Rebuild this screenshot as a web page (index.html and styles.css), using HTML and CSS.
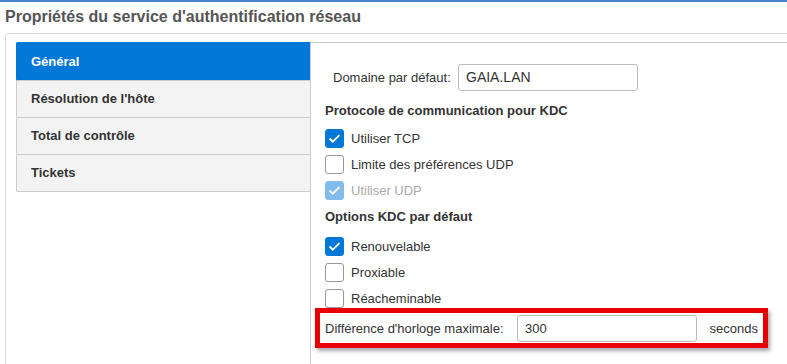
FILE: index.html
```html
<!DOCTYPE html>
<html lang="fr">
<head>
    <meta charset="UTF-8">
    <title>Propriétés du service d'authentification réseau</title>
    <link rel="stylesheet" href="styles.css">
</head>
<body>
    <div class="topline"></div>
    <h1 class="title">Propriétés du service d'authentification réseau</h1>
    <div class="panel">
        <div class="tabs">
            <div class="tab active">Général</div>
            <div class="tab">Résolution de l'hôte</div>
            <div class="tab">Total de contrôle</div>
            <div class="tab">Tickets</div>
        </div>
        <div class="pane">
            <div class="field-row">
                <label class="field-label">Domaine par défaut:</label>
                <div class="textbox">GAIA.LAN</div>
            </div>

            <h2 class="section first">Protocole de communication pour KDC</h2>
            <div class="check-row">
                <span class="box checked"><svg viewBox="0 0 19 19"><path d="M4 9.5l3.6 3.6L15 5.6"/></svg></span>
                <span>Utiliser TCP</span>
            </div>
            <div class="check-row">
                <span class="box"></span>
                <span>Limite des préférences UDP</span>
            </div>
            <div class="check-row disabled">
                <span class="box checked"><svg viewBox="0 0 19 19"><path d="M4 9.5l3.6 3.6L15 5.6"/></svg></span>
                <span>Utiliser UDP</span>
            </div>

            <h2 class="section">Options KDC par défaut</h2>
            <div class="check-row">
                <span class="box checked"><svg viewBox="0 0 19 19"><path d="M4 9.5l3.6 3.6L15 5.6"/></svg></span>
                <span>Renouvelable</span>
            </div>
            <div class="check-row">
                <span class="box"></span>
                <span>Proxiable</span>
            </div>
            <div class="check-row">
                <span class="box"></span>
                <span>Réacheminable</span>
            </div>

            <div class="skew-row">
                <label class="skew-label">Différence d'horloge maximale:</label>
                <div class="textbox skew-input">300</div>
                <span class="unit">seconds</span>
            </div>
        </div>
    </div>
</body>
</html>
```

FILE: styles.css
```css
body {
    margin: 0;
    font-family: 'Liberation Sans', Arial, sans-serif;
    font-size: 13px;
    color: #333;
    background-color: #fff;
    overflow: hidden;
    height: 364px;
}
.topline {
    height: 2px;
    background-color: #4a82cc;
}
.title {
    margin: 0;
    padding: 5px 0 0 5px;
    height: 26px;
    font-size: 16px;
    font-weight: bold;
    color: #555;
    line-height: 20px;
}
.panel {
    margin-left: 5px;
    width: 771px;
    height: 322px;
    border: 1px solid #ddd;
    border-right: none;
    border-bottom: none;
    border-radius: 4px 0 0 0;
    padding: 8px 0 0 10px;
    display: flex;
}
.tabs {
    width: 294px;
    flex-shrink: 0;
}
.tab {
    height: 36px;
    line-height: 36px;
    padding-left: 14px;
    font-weight: bold;
    background-color: #f3f3f3;
    border: 1px solid #ccc;
    border-right: none;
    border-radius: 2px 0 0 2px;
}
.tab + .tab {
    margin-top: -1px;
}
.tab.active {
    background-color: #0078d7;
    border-color: #0078d7;
    color: #fff;
    height: 37px;
    line-height: 37px;
}
.pane {
    flex: 1;
    border-top: 1px solid #ccc;
    border-left: 1px solid #ccc;
    padding: 21px 0 0 14px;
}
.field-row {
    display: flex;
    align-items: center;
    padding-left: 8px;
}
.field-label {
    width: 125px;
}
.textbox {
    box-sizing: border-box;
    width: 180px;
    height: 27px;
    border: 1px solid #bbb;
    border-radius: 3px;
    padding: 0 7px;
    line-height: 25px;
    font-size: 14px;
}
.section {
    margin: 6px 0 8px;
    font-size: 13px;
    font-weight: bold;
    line-height: 16px;
}
.section.first {
    margin: 12px 0 6px;
}
.check-row {
    display: flex;
    align-items: center;
    height: 26px;
}
.box {
    box-sizing: border-box;
    width: 19px;
    height: 19px;
    border: 1px solid #999;
    border-radius: 3px;
    margin-right: 7px;
    display: flex;
}
.box svg {
    width: 17px;
    height: 17px;
}
.box path {
    fill: none;
    stroke: #fff;
    stroke-width: 2;
}
.box.checked {
    background-color: #0078d7;
    border-color: #0078d7;
}
.check-row.disabled {
    color: #aaa;
}
.check-row.disabled .box {
    background-color: #82bcec;
    border-color: #82bcec;
}
.skew-row {
    position: relative;
    display: flex;
    align-items: center;
    margin: -3px 0 0 -10px;
    width: 433px;
    height: 30px;
    padding: 0 5px;
    border: 5px solid #e80000;
    background-color: #fff;
    box-shadow: 2px 3px 4px rgba(0, 0, 0, 0.35);
}
.skew-label {
    width: 192px;
}
.skew-input {
    font-size: 13px;
}
.unit {
    margin-left: auto;
}
```
